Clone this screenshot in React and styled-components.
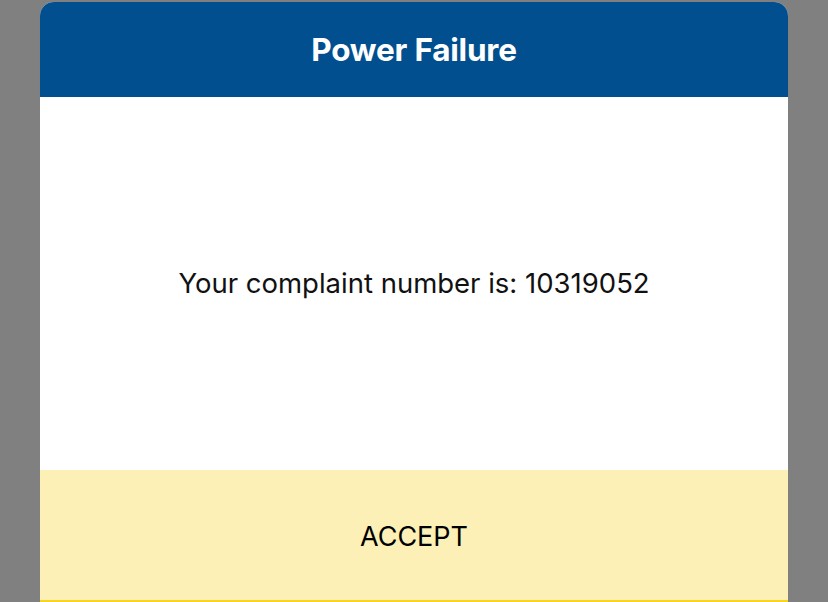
import React from 'react'
import styled, { createGlobalStyle } from "styled-components"

const GlobalStyle = createGlobalStyle`
    html, body {
        margin: 0;
        padding: 0;
        background: #808080;
        font-family: "Inter", "Liberation Sans", sans-serif;
    }
`

const Backdrop = styled.div`
    width: 828px;
    height: 602px;
    overflow: hidden;
    background: #808080;
    padding: 2px 40px 0;
    box-sizing: border-box;
`

const Dialog = styled.div`
    display: flex;
    flex-direction: column;
    height: 600px;
    border-radius: 14px 14px 0 0;
    overflow: hidden;
    background: #ffffff;
`

const Header = styled.div`
    height: 95px;
    flex-shrink: 0;
    display: flex;
    align-items: center;
    justify-content: center;
    background: #014f8e;
    color: #ffffff;
    font-size: 31.5px;
    font-weight: 700;
    letter-spacing: -0.2px;
`

const Body = styled.div`
    flex: 1;
    display: flex;
    align-items: center;
    justify-content: center;
    padding-bottom: 1px;
    color: #111111;
    font-size: 27.5px;
`

const AcceptButton = styled.button`
    height: 132px;
    flex-shrink: 0;
    border: none;
    border-bottom: 2px solid #f9d41e;
    background: #fdf0b6;
    color: #000000;
    font-family: inherit;
    font-size: 27px;
    padding: 2px 0 0;
    cursor: pointer;
`

const App = () => {
    return (
        <>
            <GlobalStyle />
            <Backdrop>
                <Dialog>
                    <Header>Power Failure</Header>
                    <Body>Your complaint number is: 10319052</Body>
                    <AcceptButton>ACCEPT</AcceptButton>
                </Dialog>
            </Backdrop>
        </>
    )
}

export default App
